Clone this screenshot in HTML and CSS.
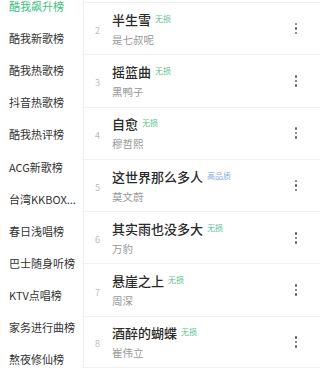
FILE: index.html
```html
<!DOCTYPE html>
<html lang="zh-CN">
<head>
    <meta charset="UTF-8">
    <meta name="viewport" content="width=device-width, initial-scale=1.0">
    <title>排行榜</title>
    <link rel="stylesheet" href="styles.css">
</head>
<body>
    <div class="page">
        <ul class="board-list">
            <li class="board active">酷我飙升榜</li>
            <li class="board">酷我新歌榜</li>
            <li class="board">酷我热歌榜</li>
            <li class="board">抖音热歌榜</li>
            <li class="board">酷我热评榜</li>
            <li class="board">ACG新歌榜</li>
            <li class="board">台湾KKBOX...</li>
            <li class="board">春日浅唱榜</li>
            <li class="board">巴士随身听榜</li>
            <li class="board">KTV点唱榜</li>
            <li class="board">家务进行曲榜</li>
            <li class="board">熬夜修仙榜</li>
        </ul>

        <ul class="song-list">
            <li class="song">
                <span class="rank">2</span>
                <div class="info">
                    <div class="title">半生雪 <span class="tag">无损</span></div>
                    <div class="artist">是七叔呢</div>
                </div>
                <span class="more"><i></i><i></i><i></i></span>
            </li>
            <li class="song">
                <span class="rank">3</span>
                <div class="info">
                    <div class="title">摇篮曲 <span class="tag">无损</span></div>
                    <div class="artist">黑鸭子</div>
                </div>
                <span class="more"><i></i><i></i><i></i></span>
            </li>
            <li class="song">
                <span class="rank">4</span>
                <div class="info">
                    <div class="title">自愈 <span class="tag">无损</span></div>
                    <div class="artist">穆哲熙</div>
                </div>
                <span class="more"><i></i><i></i><i></i></span>
            </li>
            <li class="song">
                <span class="rank">5</span>
                <div class="info">
                    <div class="title">这世界那么多人 <span class="tag hq">高品质</span></div>
                    <div class="artist">莫文蔚</div>
                </div>
                <span class="more"><i></i><i></i><i></i></span>
            </li>
            <li class="song">
                <span class="rank">6</span>
                <div class="info">
                    <div class="title">其实雨也没多大 <span class="tag">无损</span></div>
                    <div class="artist">万豹</div>
                </div>
                <span class="more"><i></i><i></i><i></i></span>
            </li>
            <li class="song">
                <span class="rank">7</span>
                <div class="info">
                    <div class="title">悬崖之上 <span class="tag">无损</span></div>
                    <div class="artist">周深</div>
                </div>
                <span class="more"><i></i><i></i><i></i></span>
            </li>
            <li class="song">
                <span class="rank">8</span>
                <div class="info">
                    <div class="title">酒醉的蝴蝶 <span class="tag">无损</span></div>
                    <div class="artist">崔伟立</div>
                </div>
                <span class="more"><i></i><i></i><i></i></span>
            </li>
        </ul>
    </div>
</body>
</html>
```

FILE: styles.css
```css
* {
    box-sizing: border-box;
}
body {
    margin: 0;
    background-color: #fff;
    font-family: "Noto Sans CJK SC", "Noto Sans", sans-serif;
    overflow: hidden;
}
ul {
    list-style: none;
    margin: 0;
    padding: 0;
}
.page {
    display: flex;
    height: 368px;
    overflow: hidden;
}
.board-list {
    width: 83px;
    flex-shrink: 0;
    margin-top: -10px;
}
.board {
    height: 32.1px;
    display: flex;
    align-items: center;
    padding-left: 9px;
    font-size: 11px;
    color: #333;
    white-space: nowrap;
}
.board.active {
    color: #3fbf82;
}
.song-list {
    flex: 1;
    border-left: 1px solid #eee;
    padding-top: 2px;
}
.song {
    height: 52.3px;
    display: flex;
    align-items: center;
    border-top: 1px solid #f0f0f0;
}
.song:last-child {
    border-bottom: 1px solid #f0f0f0;
}
.rank {
    width: 27px;
    text-align: center;
    font-size: 9px;
    color: #bbb;
    margin-top: 4px;
}
.info {
    flex: 1;
    padding-left: 1px;
}
.title {
    font-size: 13px;
    font-weight: 500;
    color: #2a2a2a;
    line-height: 20px;
}
.tag {
    font-size: 8px;
    font-weight: 400;
    color: #5cc394;
    vertical-align: 3px;
    margin-left: 1px;
}
.tag.hq {
    color: #7fb0dc;
}
.artist {
    font-size: 10.5px;
    color: #999;
    line-height: 18px;
    margin-top: 1px;
}
.more {
    width: 24px;
    margin-right: 12px;
    display: flex;
    flex-direction: column;
    align-items: center;
    gap: 2px;
}
.more i {
    width: 2.5px;
    height: 2.5px;
    border-radius: 50%;
    background-color: #666;
}
```
